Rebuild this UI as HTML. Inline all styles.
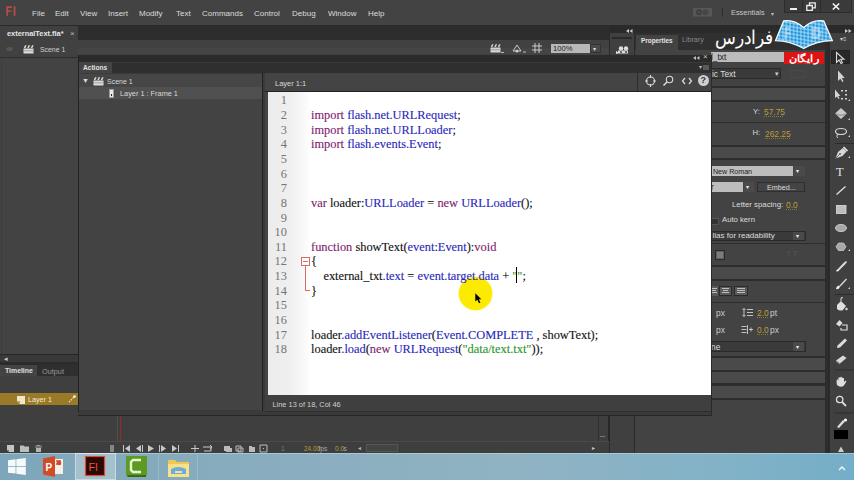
<!DOCTYPE html>
<html><head><meta charset="utf-8">
<style>
*{margin:0;padding:0;box-sizing:border-box}
html,body{width:854px;height:480px;overflow:hidden;background:#434343;font-family:"Liberation Sans",sans-serif;font-size:8.5px;color:#ddd;position:relative}
.a{position:absolute}
.t{position:absolute;white-space:nowrap;line-height:1}
.menu .t{top:9.7px;font-size:8px;color:#dcdcdc}
.code{font-family:"Liberation Serif",serif;font-size:12.4px;line-height:14.65px;color:#111;-webkit-text-stroke:0.12px currentColor}
.ln{position:absolute;left:0;width:22px;text-align:right;color:#747474;-webkit-text-stroke:0}
.cl{position:absolute;left:46px;white-space:pre}
.kw{color:#80226f}
.bl{color:#2828bb}
.gr{color:#2a962a}
.gold{color:#bb9c38;text-decoration:underline dotted #8a7a3a}
svg{position:absolute;overflow:visible}
</style></head><body>
<!-- ===== MENU BAR ===== -->
<div class="a menu" style="left:0;top:0;width:854px;height:25px;background:#434343">
  <svg style="left:6px;top:6px" width="10" height="10" viewBox="0 0 10 10"><path d="M0.3 0.3h5.5v1.6H2.1v2.3h3.2v1.6H2.1v4H0.3z M7.6 0.3h1.9v9.5H7.6z" fill="#b24e44"/></svg>
  <div class="t" style="left:32px">File</div>
  <div class="t" style="left:55px">Edit</div>
  <div class="t" style="left:80px">View</div>
  <div class="t" style="left:108px">Insert</div>
  <div class="t" style="left:139px">Modify</div>
  <div class="t" style="left:176px">Text</div>
  <div class="t" style="left:202px">Commands</div>
  <div class="t" style="left:254px">Control</div>
  <div class="t" style="left:292px">Debug</div>
  <div class="t" style="left:328px">Window</div>
  <div class="t" style="left:368px">Help</div>
  <svg style="left:693px;top:8px" width="19" height="9" viewBox="0 0 19 9"><rect width="19" height="8.5" fill="#575757"/><circle cx="6" cy="4.2" r="3" fill="#3d3d3d"/><circle cx="12.5" cy="4.2" r="3" fill="#464646"/><path d="M4.5 4.2h3" stroke="#666" stroke-width="0.8"/></svg>
  <div class="a" style="left:722px;top:8px;width:1px;height:9px;background:#2e2e2e"></div>
  <div class="t" style="left:731px;top:9.44px;font-size:7.4px;color:#c8c8c8">Essentials</div>
  <div class="t" style="left:771px;top:11px;font-size:6px;color:#bbb">▾</div>
  <!-- window buttons -->
  <div class="a" style="left:784px;top:0;width:68px;height:13px;background:#3a3a3a;border:1px solid #2c2c2c;border-top:0"></div>
  <div class="a" style="left:802px;top:0;width:1px;height:12px;background:#2c2c2c"></div>
  <div class="a" style="left:820px;top:0;width:1px;height:12px;background:#2c2c2c"></div>
  <div class="a" style="left:790px;top:7.5px;width:7px;height:2px;background:#f0f0f0"></div>
  <svg style="left:806px;top:2px" width="10" height="9" viewBox="0 0 10 9"><path d="M3.5 0.8h5.7v5h-5.7z" fill="none" stroke="#eee" stroke-width="1.3"/><path d="M0.8 3.5h5.5v4.8H0.8z" fill="#3a3a3a" stroke="#eee" stroke-width="1.3"/></svg>
  <svg style="left:832px;top:2.5px" width="8" height="7" viewBox="0 0 8 7"><path d="M0.8 0.5L7.2 6.5M7.2 0.5L0.8 6.5" stroke="#f4f4f4" stroke-width="1.6"/></svg>
</div>
<div class="a" style="left:0;top:25px;width:854px;height:1px;background:#2a2a2a"></div>
<!-- ===== DOC TAB BAR ===== -->
<div class="a" style="left:0;top:26px;width:609px;height:14px;background:#2d2d2d"></div>
<div class="a" style="left:0;top:26px;width:78px;height:14px;background:#404040"></div>
<div class="t" style="left:7px;top:30.24px;font-size:7.4px;font-weight:bold;color:#e6e6e6">externalText.fla*</div>
<div class="t" style="left:70px;top:30px;font-size:8px;color:#bbb">×</div>
<!-- ===== SCENE BAR ===== -->
<div class="a" style="left:0;top:40px;width:609px;height:17px;background:#414141"></div>
<div class="a" style="left:78px;top:48px;width:531px;height:6px;background:#454545"></div>
<div class="a" style="left:6px;top:47px;width:7px;height:4px;border-radius:50%;background:#555"></div>
<svg style="left:23px;top:44px" width="11" height="10" viewBox="0 0 11 10"><path d="M0.5 4.5h10v5h-10z" fill="#dcdcdc"/><path d="M1 6.8h9" stroke="#8a8a8a" stroke-width="0.7"/><path d="M0.8 4L2 1.2h1.6L2.4 4z M4.3 4L5.5 1.2h1.6L5.9 4z M7.8 4L9 1.2h1.6L9.4 4z" fill="#dcdcdc"/></svg>
<div class="t" style="left:40px;top:47.2px;font-size:6.9px;color:#d0d0d0">Scene 1</div>
<!-- stage toolbar icons -->
<svg style="left:490px;top:43px" width="11" height="10" viewBox="0 0 11 10"><path d="M0.5 4.5h10v5h-10z" fill="#d4d4d4"/><path d="M1 6.8h9" stroke="#8a8a8a" stroke-width="0.7"/><path d="M0.8 4L2 1.2h1.6L2.4 4z M4.3 4L5.5 1.2h1.6L5.9 4z M7.8 4L9 1.2h1.6L9.4 4z" fill="#d4d4d4"/></svg><div class="a" style="left:501px;top:52px;width:3px;height:1px;background:#bbb"></div>
<svg style="left:512px;top:43px" width="14" height="10" viewBox="0 0 14 10"><path d="M1 8 L5 2 L9 8z" fill="none" stroke="#ccc" stroke-width="1"/><circle cx="5" cy="8" r="1.5" fill="#ccc"/><path d="M11 9h3" stroke="#bbb"/></svg>
<svg style="left:532px;top:43px" width="10" height="10" viewBox="0 0 10 10"><path d="M0 3h10M0 7h10M3 0v10M7 0v10" stroke="#ccc" stroke-width="1"/></svg>
<div class="a" style="left:551px;top:44px;width:39px;height:9px;background:#b8b8b8"></div>
<div class="t" style="left:553px;top:45px;font-size:7.6px;color:#222">100%</div>
<div class="a" style="left:590px;top:44px;width:11px;height:9px;background:#4a4a4a;border:1px solid #333"></div>
<div class="t" style="left:593px;top:46px;font-size:6px;color:#ddd">▾</div>
<div class="a" style="left:0;top:57px;width:609px;height:1px;background:#2e2e2e"></div>
<!-- ===== STAGE LEFT ===== -->
<div class="a" style="left:0;top:58px;width:78px;height:296px;background:#434343"></div>
<div class="a" style="left:1px;top:58px;width:1px;height:296px;background:#3d3d3d"></div>
<!-- ===== TIMELINE ===== -->
<div class="a" style="left:0;top:354px;width:78px;height:1px;background:#262626"></div>
<div class="a" style="left:0;top:355px;width:78px;height:7px;background:#393939"></div>
<div class="t" style="left:4px;top:355px;font-size:7px;color:#ccc">◂</div>
<div class="a" style="left:0;top:362px;width:78px;height:3px;background:#2b2b2b"></div>
<div class="a" style="left:0;top:365px;width:609px;height:11px;background:#2f2f2f"></div>
<div class="a" style="left:0;top:365px;width:37px;height:11px;background:#434343"></div>
<div class="t" style="left:5px;top:368.2px;font-size:6.9px;font-weight:bold;color:#e0e0e0">Timeline</div>
<div class="t" style="left:42px;top:367.8px;font-size:7.3px;color:#999">Output</div>
<div class="a" style="left:0;top:376px;width:609px;height:77px;background:#3f3f3f"></div>
<div class="a" style="left:78px;top:376px;width:1px;height:40px;background:#222"></div>
<div class="a" style="left:0;top:392.5px;width:78px;height:12.5px;background:#9a7a27"></div>
<svg style="left:17px;top:395.5px" width="8" height="8" viewBox="0 0 8 8"><path d="M0 0h8v8H3L0 5z" fill="#efe6cf"/><path d="M0 5h3v3z" fill="#b8a070"/></svg>
<div class="t" style="left:28px;top:395.91px;font-size:7.2px;color:#f4ecd8">Layer 1</div>
<svg style="left:68px;top:395px" width="8" height="8" viewBox="0 0 8 8"><path d="M1 7 L6 2" stroke="#e8dcc0" stroke-width="1.3" stroke-dasharray="1.5 1"/><circle cx="6.5" cy="1.5" r="1.3" fill="#fff"/></svg>
<div class="a" style="left:117px;top:416px;width:1px;height:37px;background:#505048"></div>
<div class="a" style="left:120px;top:360px;width:1px;height:82px;background:#9a2a2a"></div>
<div class="a" style="left:598px;top:416px;width:1px;height:37px;background:#303030"></div>
<div class="a" style="left:599px;top:416px;width:9px;height:27px;background:#3f3f3f"></div>
<div class="a" style="left:600px;top:436px;width:5px;height:1px;background:#777"></div>
<div class="a" style="left:599px;top:443px;width:9px;height:10px;background:#474747;border-top:1px solid #2e2e2e"></div>
<div class="a" style="left:608px;top:376px;width:2px;height:77px;background:#262626"></div>
<!-- bottom toolbar -->
<div class="a" style="left:0;top:441px;width:609px;height:1px;background:#4a4a4a"></div>
<div class="a" style="left:0;top:442px;width:609px;height:11px;background:#3e3e3e"></div>
<svg style="left:7px;top:445px" width="40" height="8" viewBox="0 0 40 8"><path d="M0 0h7v7H2L0 5z" fill="#c4c4c4"/><path d="M0 5h2v2z" fill="#777"/><path d="M13 0.5h3.5l1 1H22v5.5h-9z" fill="#bdbdbd"/><path d="M28 1h7L31.5 0z" fill="#bbb"/><path d="M28 2h7" stroke="#bbb" stroke-width="0.8"/><path d="M29 3h5v4h-5z" fill="#b5b5b5"/></svg>
<div class="a" style="left:110px;top:445px;width:4px;height:7px;background:#858585"></div>
<svg style="left:122px;top:445px" width="150" height="7" viewBox="0 0 150 7" fill="#c8c8c8"><path d="M1 0h1v7H1z M8 0v7L3 3.5z"/><path d="M14 0v7L9 3.5z M15 0h1v7h-1z" transform="translate(5 0)"/><path d="M26 0v7l6-3.5z"/><path d="M37 0h1v7h-1z M39 0v7l5-3.5z"/><path d="M50 0v7l5-3.5z M56 0h1v7h-1z"/><path d="M69 3.5h8M73 0v7" stroke="#c8c8c8"/><path d="M81 2h8v4h-7M88 0l2 2-2 2" stroke="#c8c8c8" fill="none"/><path d="M102 1h6v5h-6z M104 3h6v4h-6z" fill="#bbb"/><path d="M114 1h5v5h-5z M116 3h5v4h-5z" stroke="#bbb" fill="none"/><path d="M127 1h3v6h-3z M130 2h3v5h-3z" fill="#bbb"/><path d="M138 0h7v7h-7z" stroke="#bbb" fill="none"/><path d="M141 3h1v1h-1z"/></svg>
<div class="t" style="left:281px;top:445.5px;font-size:6.8px;color:#777">1</div>
<div class="t" style="left:304px;top:445.5px;font-size:6.4px;color:#b89a38">24.00</div>
<div class="t" style="left:318.5px;top:445.5px;font-size:6.6px;color:#aaa">fps</div>
<div class="t" style="left:335px;top:445.5px;font-size:6.6px;color:#b89a38">0.0</div>
<div class="t" style="left:343.5px;top:445.5px;font-size:6.6px;color:#aaa">s</div>
<div class="t" style="left:358px;top:445px;font-size:6px;color:#bbb">◂</div>
<div class="a" style="left:366px;top:444px;width:32px;height:8px;background:#444;border:1px solid #555"></div>
<div class="t" style="left:592px;top:445px;font-size:6px;color:#ccc">▸</div>
<!-- ===== RIGHT DOCK ===== -->
<div class="a" style="left:609px;top:26px;width:245px;height:427px;background:#2a2a2a"></div>
<svg style="left:626px;top:29px" width="7" height="4" viewBox="0 0 7 4"><path d="M0 2L3 0V4Z M3.5 2L6.5 0V4Z" fill="#ccc"/></svg>
<svg style="left:845px;top:29px" width="7" height="4" viewBox="0 0 7 4"><path d="M3 2L0 0V4Z M6.5 2L3.5 0V4Z" fill="#ccc"/></svg>
<!-- camera panel -->
<div class="a" style="left:610px;top:33px;width:24px;height:420px;background:#404040"></div>
<div class="a" style="left:612px;top:37px;width:20px;height:2px;background:#2a2a2a"></div>
<svg style="left:616px;top:46px" width="14" height="8" viewBox="0 0 14 8"><circle cx="5" cy="2.5" r="2.2" fill="#ddd"/><circle cx="10" cy="2.5" r="2.2" fill="#ddd"/><path d="M2 4.5h10v3H2z" fill="#ddd"/><path d="M0 5l2 1v1.5L0 8z" fill="#ddd"/><circle cx="5" cy="6" r="1" fill="#404040"/><circle cx="10" cy="6" r="1" fill="#404040"/></svg>
<!-- properties panel -->
<div class="a" style="left:635px;top:33px;width:193px;height:420px;background:#434343"></div>
<div class="a" style="left:635px;top:33px;width:193px;height:17px;background:#303030"></div>
<div class="a" style="left:636px;top:35px;width:42px;height:15px;background:#434343"></div>
<div class="t" style="left:641px;top:38.08px;font-size:6.4px;font-weight:bold;color:#e6e6e6">Properties</div>
<div class="t" style="left:682px;top:37.49px;font-size:7.1px;color:#888">Library</div>
<div class="a" style="left:711px;top:52px;width:73px;height:10px;background:#bcbcbc"></div>
<div class="t" style="left:711px;top:53px;font-size:8.4px;color:#222">l_txt</div>
<div class="a" style="left:711px;top:68px;width:70px;height:11px;background:#3a3a3a;border:1px solid #2a2a2a"></div>
<div class="t" style="left:712px;top:70px;font-size:8.4px;color:#ddd">ic Text</div>
<div class="t" style="left:775px;top:70px;font-size:7px;color:#ccc">▾</div>
<div class="a" style="left:790px;top:70px;width:15px;height:8px;border:1px solid #4a4a4a"></div>
<div class="a" style="left:711px;top:86px;width:117px;height:2px;background:#2d2d2d"></div>
<div class="a" style="left:711px;top:88px;width:114px;height:12px;background:#4a4a4a"></div>
<div class="a" style="left:711px;top:100px;width:117px;height:2px;background:#2d2d2d"></div>
<div class="t" style="left:753px;top:108.48px;font-size:7.7px;color:#ddd">Y:</div>
<div class="t gold" style="left:764px;top:108.48px;font-size:7.7px;font-size:8.4px">57.75</div>
<div class="a" style="left:711px;top:122px;width:114px;height:1px;background:#2d2d2d"></div>
<div class="t" style="left:752.5px;top:129.48px;font-size:7.7px;color:#ddd">H:</div>
<div class="t gold" style="left:765px;top:129.74px;font-size:7.4px;font-size:8.4px">262.25</div>
<div class="a" style="left:711px;top:145px;width:117px;height:2px;background:#2d2d2d"></div>
<div class="a" style="left:711px;top:147px;width:114px;height:11px;background:#4a4a4a"></div>
<div class="a" style="left:711px;top:158px;width:117px;height:2px;background:#2d2d2d"></div>
<div class="a" style="left:711px;top:166px;width:82px;height:10px;background:#bdbdbd"></div>
<div class="t" style="left:713px;top:168.59px;font-size:7.1px;color:#222">New Roman</div>
<div class="a" style="left:794px;top:166px;width:11px;height:10px;background:#4a4a4a"></div>
<div class="t" style="left:796px;top:168px;font-size:6px;color:#eee">▾</div>
<div class="a" style="left:711px;top:182px;width:32px;height:10px;background:#bdbdbd"></div>
<div class="t" style="left:711px;top:183px;font-size:8.4px;color:#333">r</div>
<div class="a" style="left:744px;top:182px;width:10px;height:10px;background:#4a4a4a"></div>
<div class="t" style="left:746px;top:184px;font-size:6px;color:#eee">▾</div>
<div class="a" style="left:757px;top:182px;width:48px;height:10px;background:#444;border:1px solid #2e2e2e"></div>
<div class="t" style="left:767px;top:183.91px;font-size:7.2px;color:#ddd">Embed...</div>
<div class="t" style="left:732px;top:200.9px;font-size:7.8px;color:#ddd">Letter spacing:</div>
<div class="t gold" style="left:786px;top:201px;font-size:8.4px">0.0</div>
<div class="a" style="left:711px;top:218px;width:8px;height:7px;background:#333;border:1px solid #555"></div>
<div class="t" style="left:722px;top:216.48px;font-size:7.7px;color:#ddd">Auto kern</div>
<div class="a" style="left:711px;top:231px;width:95px;height:10px;background:#3a3a3a;border:1px solid #2a2a2a"></div>
<div class="t" style="left:712.5px;top:232.23px;font-size:8.0px;color:#ddd">lias for readability</div>
<div class="a" style="left:793px;top:232px;width:11px;height:8px;background:#4a4a4a"></div>
<div class="t" style="left:796px;top:233px;font-size:6px;color:#eee">▾</div>
<div class="a" style="left:711px;top:243px;width:117px;height:1px;background:#2d2d2d"></div>
<div class="a" style="left:715px;top:250px;width:10px;height:10px;background:#5e5e5e;border:1px solid #2a2a2a"></div>
<svg style="left:717px;top:252px" width="6" height="6" viewBox="0 0 6 6"><path d="M0 1h6M0 3h6M0 5h6" stroke="#aaa" stroke-width="0.8"/></svg>
<div class="t" style="left:786px;top:250px;font-size:8px;color:#555">T T</div>
<div class="a" style="left:711px;top:265px;width:117px;height:2px;background:#2d2d2d"></div>
<div class="a" style="left:711px;top:267px;width:114px;height:12px;background:#4a4a4a"></div>
<div class="a" style="left:711px;top:279px;width:117px;height:2px;background:#2d2d2d"></div>
<div class="a" style="left:711px;top:286px;width:7px;height:10px;background:#5a5a5a"></div>
<div class="a" style="left:719px;top:286px;width:13px;height:10px;background:#5a5a5a;border:1px solid #2a2a2a"></div>
<div class="a" style="left:734px;top:286px;width:14px;height:10px;background:#5a5a5a;border:1px solid #2a2a2a"></div>
<svg style="left:711px;top:287px" width="38" height="8" viewBox="0 0 38 8"><path d="M1 1.5h5M1 3.5h4M1 5.5h5M11 1.5h7M12 3.5h5M11 5.5h7M26 1.5h8M26 3.5h8M26 5.5h8" stroke="#c8c8c8" stroke-width="0.9"/></svg>
<div class="a" style="left:711px;top:302px;width:117px;height:1px;background:#2d2d2d"></div>
<div class="t" style="left:716px;top:309px;font-size:8.4px;color:#ccc">px</div>
<svg style="left:742px;top:308px" width="11" height="9" viewBox="0 0 11 9"><path d="M2 0.5v8M0.5 2L2 0.5 3.5 2M0.5 7L2 8.5 3.5 7M5 1.5h6M5 4.5h6M5 7.5h6" stroke="#d0d0d0" stroke-width="0.9" fill="none"/></svg>
<div class="t gold" style="left:757px;top:309px;font-size:8.4px">2.0</div>
<div class="t" style="left:770px;top:309px;font-size:8.4px;color:#ccc">pt</div>
<div class="t" style="left:716px;top:326px;font-size:8.4px;color:#ccc">px</div>
<svg style="left:741px;top:325px" width="12" height="9" viewBox="0 0 12 9"><path d="M0.5 1.5h5M0.5 4.5h5M0.5 7.5h5M6.5 0v9M8 4.5h4M10 2.5v4" stroke="#d0d0d0" stroke-width="0.9" fill="none"/></svg>
<div class="t gold" style="left:757px;top:326px;font-size:8.4px">0.0</div>
<div class="t" style="left:770px;top:326px;font-size:8.4px;color:#ccc">px</div>
<div class="a" style="left:711px;top:341px;width:95px;height:11px;background:#3a3a3a;border:1px solid #2a2a2a"></div>
<div class="t" style="left:711px;top:343px;font-size:8.4px;color:#ddd">ne</div>
<div class="a" style="left:793px;top:342px;width:11px;height:9px;background:#4a4a4a"></div>
<div class="t" style="left:796px;top:344px;font-size:6px;color:#eee">▾</div>
<div class="a" style="left:711px;top:356px;width:117px;height:2px;background:#2d2d2d"></div>
<div class="a" style="left:711px;top:358px;width:114px;height:12px;background:#4a4a4a"></div>
<div class="a" style="left:711px;top:370px;width:117px;height:2px;background:#2d2d2d"></div>
<div class="a" style="left:711px;top:372px;width:114px;height:11px;background:#4a4a4a"></div>
<div class="a" style="left:711px;top:383px;width:117px;height:3px;background:#2d2d2d"></div>
<div class="a" style="left:711px;top:386px;width:114px;height:12px;background:#4a4a4a"></div>
<div class="a" style="left:711px;top:398px;width:117px;height:2px;background:#2d2d2d"></div>
<div class="a" style="left:825px;top:33px;width:3px;height:420px;background:#2d2d2d"></div>
<!-- tools -->
<div class="a" style="left:828px;top:33px;width:26px;height:420px;background:#404040"></div>
<div class="a" style="left:828px;top:33px;width:2px;height:420px;background:#2a2a2a"></div>
<div class="t" style="left:840px;top:36px;font-size:6px;color:#ccc">▾≡</div>
<div class="a" style="left:831px;top:50px;width:19px;height:14px;background:#282828;border:1px solid #222"></div>
<svg style="left:830px;top:50px" width="24" height="405" viewBox="0 0 24 405">
 <g fill="none" stroke="#d8d8d8" stroke-width="1.1">
  <path d="M6.5 2.5 L6.5 12.5 L9 10 L11 13.5 L12.5 12.7 L10.7 9.3 L14 9.3 Z"/>
 </g>
 <g fill="#d4d4d4">
  <path d="M8 20.5 L8 31 L10.3 28.8 L12.3 32 L13.5 31.2 L11.8 28 L14.8 28 Z"/>
  <path d="M5 39.5 L5 48 L7 46.5 L8.5 49 L9.5 48.5 L8.3 46 L10.5 46 Z"/>
  <path d="M11 40h2v1.5h-2zM15 40h2v1.5h-2zM15 44h2v1.5h-2zM11 48h2v1.5h-2zM15 48h2v1.5h-2z"/>
  <path d="M18 51 L20 49 L20 51 Z M18 70 L20 68 L20 70 Z M18 87 L20 85 L20 87 Z M18 108 L20 106 L20 108 Z M18 201 L20 199 L20 201 Z M18 239 L20 237 L20 239 Z"/>
 </g>
 <g fill="#cfcfcf">
  <path d="M11 58 L17 63.5 L11 69 L5 63.5 Z" fill="#c8c8c8"/>
  <path d="M5 63.5 Q11 67 17 63.5" stroke="#777" stroke-width="0.8" fill="none"/>
 </g>
 <ellipse cx="11" cy="81.5" rx="5.5" ry="3" fill="none" stroke="#d4d4d4" stroke-width="1.2"/>
 <path d="M7.5 84 Q6 87 8 88" fill="none" stroke="#d4d4d4" stroke-width="1"/>
 <path d="M5 93.5 h22" stroke="#2c2c2c" stroke-width="1"/>
 <path d="M5.5 108.5 L8 102 L13 98 L16.5 101.5 L12.5 106 Z" fill="#d8d8d8"/>
 <path d="M13.5 97 L17.5 101" stroke="#e8e8e8" stroke-width="1.6"/>
 <path d="M5.5 108.5 L9.5 104.5" stroke="#555" stroke-width="0.8"/><circle cx="10" cy="104" r="0.9" fill="#555"/>
 <text x="6" y="125.9" font-family="Liberation Serif" font-size="12.5" fill="#e0e0e0">T</text>
 <path d="M6.5 144.5 L15.5 136.5" stroke="#e0e0e0" stroke-width="1.3"/>
 <rect x="6.5" y="155.5" width="9.5" height="8" fill="#bdbdbd" stroke="#ddd" stroke-width="0.8"/>
 <ellipse cx="11" cy="178" rx="5.5" ry="3.6" fill="#a8a8a8" stroke="#ddd" stroke-width="0.8"/>
 <path d="M8.5 193 L13.5 193 L16 196.7 L13.5 200.5 L8.5 200.5 L6 196.7 Z" fill="#a8a8a8" stroke="#ccc" stroke-width="0.8"/>
 <path d="M6.5 220.5 L13.5 213 L16 211 L17 212 L15 214.5 L8 221.5 Z" fill="#ddd"/>
 <path d="M6 221.5 L7 219.5 L8.5 221 Z" fill="#fff"/>
 <path d="M16.5 229 L10 236" stroke="#ddd" stroke-width="1.3"/>
 <path d="M6 239 Q6.5 235.5 9.5 235.5 Q10.5 237 9 238.5 Q7.5 239.5 6 239 Z" fill="#eee"/>
 <path d="M5 244.5 h22" stroke="#2c2c2c" stroke-width="1"/>
 <path d="M7 255 L11 251 L16 256 L12.5 260.5 Q9 261 7 259 Z" fill="#e0e0e0"/>
 <path d="M11 251 L11 248 Q12 247 13 248" stroke="#ddd" fill="none" stroke-width="1"/>
 <circle cx="16.5" cy="259" r="1.2" fill="#ddd"/>
 <path d="M6 274 L9.5 270 L12.5 273 L9.5 276.5 Z" fill="#ddd"/>
 <path d="M12 275 h5 v5 h-6 v-2" stroke="#ddd" fill="none" stroke-width="1.2"/>
 <path d="M15 288.5 L17 290.5 L10 297.5 L7 298 L7.5 295.5 Z" fill="#ddd"/>
 <g transform="translate(0 4)"><path d="M6 306.5 L13 301.5 L16.5 304 L10 309.5 Z" fill="#d8d8d8"/>
 <path d="M6 306.5 L10 309.5 L10 310.5 L6 307.5 Z" fill="#999"/></g>
 <path d="M5 320 h22" stroke="#2c2c2c" stroke-width="1"/>
<path transform="translate(0 3)" d="M7 332 Q6 329 7 326 L8 327 L8.3 328 L8.5 324.5 Q9.5 324 10 325 L10.5 324 Q11.5 323.5 12 324.5 L12.5 325 Q13.5 324.5 14 325.5 L14 329 L15.5 327.5 Q16.7 327.5 16.2 329 L13.5 333 Q10 335 7 332 Z" fill="#ddd"/>
 <circle cx="9.7" cy="349.5" r="3.2" fill="none" stroke="#ddd" stroke-width="1.3"/>
 <path d="M12 352 L16 356" stroke="#ddd" stroke-width="1.8"/>
 <path d="M5 363 h22" stroke="#2c2c2c" stroke-width="1"/>
 <path d="M7 377 L13 370 L15 371.5 L9 378 Z" fill="#ddd"/>
 <circle cx="15.5" cy="370" r="1.6" fill="#fff"/>
 <rect x="4" y="380" width="14" height="9" fill="#000"/>
 <path d="M8 402 L11 396.5 L14 402 Z" fill="#ccc"/>
</svg>
<!-- ===== ACTIONS PANEL ===== -->
<div class="a" style="left:78px;top:55px;width:634px;height:7px;background:#2b2b2b"></div>
<svg style="left:693px;top:56px" width="7" height="4" viewBox="0 0 7 4"><path d="M0 2L3 0V4Z M3.5 2L6.5 0V4Z" fill="#bbb"/></svg>
<div class="t" style="left:703px;top:53px;font-size:8px;color:#ccc">×</div>
<div class="a" style="left:78px;top:62px;width:634px;height:11px;background:#2f2f2f"></div>
<div class="a" style="left:78px;top:62px;width:634px;height:1px;background:#393939"></div>
<div class="a" style="left:79px;top:62px;width:33px;height:12px;background:#444"></div>
<div class="t" style="left:83px;top:64.91px;font-size:6.6px;font-weight:bold;color:#e0e0e0">Actions</div>
<div class="t" style="left:699px;top:64px;font-size:6px;color:#bbb">▾</div>
<div class="a" style="left:703px;top:65px;width:6px;height:5px;background:#5a5a5a"></div>
<div class="a" style="left:78px;top:73px;width:634px;height:343px;background:#3a3a3a"></div>
<!-- left tree -->
<div class="a" style="left:78px;top:55px;width:1px;height:361px;background:#222"></div>
<div class="a" style="left:79px;top:74px;width:183px;height:336px;background:#434343"></div>
<div class="a" style="left:79px;top:74px;width:183px;height:13px;background:#464646"></div>
<div class="a" style="left:79px;top:87px;width:183px;height:12px;background:#505050"></div>
<div class="t" style="left:82px;top:77px;font-size:7px;color:#ddd">▼</div>
<svg style="left:93px;top:75.5px" width="11" height="10" viewBox="0 0 11 10"><path d="M0.5 4.5h10v5h-10z" fill="#dcdcdc"/><path d="M1 6.8h9" stroke="#8a8a8a" stroke-width="0.7"/><path d="M0.8 4L2 1.2h1.6L2.4 4z M4.3 4L5.5 1.2h1.6L5.9 4z M7.8 4L9 1.2h1.6L9.4 4z" fill="#dcdcdc"/></svg>
<div class="t" style="left:107px;top:77.7px;font-size:7.0px;color:#d8d8d8">Scene 1</div>
<div class="a" style="left:109px;top:89px;width:5px;height:9px;background:#e8e8e8;border:1px solid #999"></div>
<div class="a" style="left:111px;top:94px;width:1px;height:2px;background:#222"></div>
<div class="t" style="left:120px;top:89.78px;font-size:7.35px;color:#d8d8d8">Layer 1 : Frame 1</div>
<div class="a" style="left:262px;top:73px;width:1px;height:338px;background:#222"></div>
<div class="a" style="left:263px;top:73px;width:2px;height:338px;background:#3a3a3a"></div>
<!-- right code panel -->
<div class="a" style="left:265px;top:73px;width:447px;height:19px;background:#444"></div>
<div class="t" style="left:275px;top:79.65px;font-size:7.5px;color:#d8d8d8">Layer 1:1</div>
<div class="a" style="left:637px;top:73px;width:1px;height:18px;background:#2c2c2c"></div>
<svg style="left:645px;top:75px" width="64" height="12" viewBox="0 0 64 12" fill="none" stroke="#d8d8d8" stroke-width="1.1">
 <circle cx="5.5" cy="6" r="4"/><path d="M5.5 0v3M5.5 9v3M0 6h3M8 6h3"/>
 <circle cx="24.5" cy="4.5" r="3.2"/><path d="M22 7 L18.5 10.5" stroke-width="1.6"/>
 <path d="M40 3 L37.5 6 L40 9 M44 3 L46.5 6 L44 9" stroke-width="1.3"/>
</svg>
<div class="a" style="left:698px;top:75px;width:11px;height:11px;border-radius:50%;background:#d0d0d0"></div>
<div class="t" style="left:700.5px;top:76px;font-size:9px;font-weight:bold;color:#333">?</div>
<div class="a" style="left:265px;top:91px;width:447px;height:1px;background:#222"></div>
<div class="a" style="left:265px;top:92px;width:3px;height:303px;background:#444"></div>
<div class="a" style="left:268px;top:92px;width:444px;height:303px;background:#fff"></div>
<div class="a" style="left:268px;top:92px;width:43px;height:303px;background:linear-gradient(90deg,#ececec 0,#efefef 50%,#f6f6f6 75%,#fff 100%)"></div>
<div class="a" style="left:265px;top:395px;width:447px;height:17px;background:#3f3f3f"></div>
<div class="t" style="left:272.5px;top:400.74px;font-size:7.4px;color:#cfcfcf">Line 13 of 18, Col 46</div>
<div class="a" style="left:387px;top:411.5px;width:15px;height:2px;background:#222"></div>
<div class="a" style="left:78px;top:412px;width:634px;height:4px;background:#3a3a3a"></div>
<div class="a" style="left:78px;top:415px;width:634px;height:1px;background:#262626"></div>
<div class="a" style="left:711px;top:55px;width:1px;height:361px;background:#2a2a2a"></div>
<div class="a" style="left:265px;top:410.5px;width:446px;height:1px;background:#2e2e2e"></div>
<div class="a" style="left:459px;top:277px;width:32.5px;height:32.5px;border-radius:50%;background:#fcea00;box-shadow:0 0 1px 0.5px rgba(252,234,0,0.6)"></div>
<div class="a code" style="left:265px;top:94px;width:447px;height:300px">
  <div class="ln" style="top:-0.7px">1</div><div class="cl" style="top:-0.7px"></div>
  <div class="ln" style="top:13.95px">2</div><div class="cl" style="top:13.95px"><span class="kw">import</span> <span class="bl">flash.net.URLRequest</span>;</div>
  <div class="ln" style="top:28.6px">3</div><div class="cl" style="top:28.6px"><span class="kw">import</span> <span class="bl">flash.net.URLLoader</span>;</div>
  <div class="ln" style="top:43.25px">4</div><div class="cl" style="top:43.25px"><span class="kw">import</span> <span class="bl">flash.events.Event</span>;</div>
  <div class="ln" style="top:57.9px">5</div><div class="cl" style="top:57.9px"></div>
  <div class="ln" style="top:72.55px">6</div><div class="cl" style="top:72.55px"></div>
  <div class="ln" style="top:87.2px">7</div><div class="cl" style="top:87.2px"></div>
  <div class="ln" style="top:101.85px">8</div><div class="cl" style="top:101.85px"><span class="kw">var</span> loader:<span class="bl">URLLoader</span> = <span class="kw">new</span> <span class="bl">URLLoader</span>();</div>
  <div class="ln" style="top:116.5px">9</div><div class="cl" style="top:116.5px"></div>
  <div class="ln" style="top:131.15px">10</div><div class="cl" style="top:131.15px"></div>
  <div class="ln" style="top:145.8px">11</div><div class="cl" style="top:145.8px"><span class="kw">function</span> showText(<span class="bl">event</span>:<span class="bl">Event</span>):<span class="kw">void</span></div>
  <div class="ln" style="top:160.45px">12</div><div class="cl" style="top:160.45px">{</div>
  <div class="ln" style="top:175.1px">13</div><div class="cl" style="top:175.1px">    external_txt<span class="bl">.text</span> = <span class="bl">event.target.data</span> + <span class="gr">""</span>;</div>
  <div class="ln" style="top:189.75px">14</div><div class="cl" style="top:189.75px">}</div>
  <div class="ln" style="top:204.4px">15</div><div class="cl" style="top:204.4px"></div>
  <div class="ln" style="top:219.05px">16</div><div class="cl" style="top:219.05px"></div>
  <div class="ln" style="top:233.7px">17</div><div class="cl" style="top:233.7px">loader<span class="bl">.addEventListener</span>(<span class="bl">Event.COMPLETE</span> , showText);</div>
  <div class="ln" style="top:248.35px">18</div><div class="cl" style="top:248.35px">loader<span class="bl">.load</span>(<span class="kw">new</span> <span class="bl">URLRequest</span>(<span class="gr">"data/text.txt"</span>));</div>
</div>
<!-- fold marker -->
<div class="a" style="left:301px;top:257px;width:9px;height:9px;border:1px solid #d86a6a;background:#fff"></div>
<div class="a" style="left:303px;top:261px;width:5px;height:1px;background:#d86a6a"></div>
<div class="a" style="left:305px;top:266px;width:1px;height:25px;background:#d86a6a"></div>
<div class="a" style="left:305px;top:290px;width:5px;height:1px;background:#d86a6a"></div>
<!-- text cursor -->
<div class="a" style="left:516px;top:267px;width:1px;height:16px;background:#000"></div>
<!-- yellow highlight + mouse -->
<svg style="left:475px;top:293px" width="8" height="11" viewBox="0 0 8 11"><path d="M0.3 0.2 L0.3 8.6 L2.3 6.8 L4 10.2 L5.4 9.5 L3.8 6.3 L6.3 6.3 Z" fill="#000"/></svg>
<!-- ===== TASKBAR ===== -->
<div class="a" style="left:0;top:453px;width:854px;height:27px;background:linear-gradient(90deg,#7ea6ba 0%,#8aaebf 35%,#90b3c3 60%,#82b2c7 85%,#74aec8 100%)"></div>
<div class="a" style="left:0;top:453px;width:854px;height:1px;background:rgba(200,225,235,0.5)"></div>
<div class="a" style="left:75px;top:453px;width:41px;height:27px;background:rgba(255,255,255,0.28);border:1px solid rgba(255,255,255,0.4)"></div>
<div class="a" style="left:158px;top:455px;width:1px;height:25px;background:rgba(255,255,255,0.18)"></div>
<div class="a" style="left:197px;top:455px;width:1px;height:25px;background:rgba(255,255,255,0.18)"></div>
<svg style="left:7.6px;top:457.8px" width="18" height="17" viewBox="0 0 18 17" fill="#f6fafc"><path d="M0 2.2 L7.6 1.3 L7.6 8.1 L0 8.1Z M8.3 1.2 L17.8 0 L17.8 8.1 L8.3 8.1Z M0 8.8 L7.6 8.8 L7.6 15.6 L0 14.7Z M8.3 8.8 L17.8 8.8 L17.8 17 L8.3 15.7Z"/></svg>
<svg style="left:43px;top:456px" width="21" height="21" viewBox="0 0 21 21"><path d="M0 2.5 L12 0 L12 21 L0 18.5 Z" fill="#d24b28"/><path d="M12 3 h8 v15 h-8z" fill="#f6f0ea"/><path d="M13 5 h5 M13 8 h5" stroke="#d24b28" stroke-width="1.4"/><circle cx="16" cy="7" r="2.3" fill="#d24b28"/><text x="2.5" y="14.5" font-family="Liberation Sans" font-weight="bold" font-size="10" fill="#fff">P</text></svg>
<svg style="left:85px;top:456px" width="20" height="20" viewBox="0 0 20 20"><rect x="0.5" y="0.5" width="19" height="19" fill="#2a0a06" stroke="#e04a30" stroke-width="1.2"/><text x="3.5" y="14.5" font-family="Liberation Sans" font-size="11" fill="#e8553a">Fl</text></svg>
<svg style="left:125px;top:455px" width="23" height="23" viewBox="0 0 23 23"><path d="M1 1h21v19l-2 2H3l-2-2z" fill="#5c9a24"/><path d="M2 20h19v2H3z" fill="#3a6a14"/><path d="M16 5 H8 L6 7 V15 L8 17 H16" fill="none" stroke="#e8f8d0" stroke-width="2.4"/></svg>
<svg style="left:167px;top:457px" width="23" height="21" viewBox="0 0 23 21"><path d="M1 3h7l2 2h12v15H1z" fill="#f0c850"/><path d="M1 7h21v13H1z" fill="#fbe08a"/><path d="M4 12 Q11 8 19 12 L19 17 H4z" fill="#6aaee0"/><path d="M8 14 h7 v2 h-7z" fill="#fbe08a"/></svg>
<svg style="left:838px;top:466px" width="8" height="5" viewBox="0 0 8 5"><path d="M1 4L4 1L7 4" fill="none" stroke="#f4f8fa" stroke-width="1.4"/></svg>
<!-- ===== FARADARS LOGO ===== -->
<svg style="left:772px;top:16px" width="66" height="36" viewBox="0 0 66 36">
 <defs>
  <pattern id="gp" width="3.6" height="3.6" patternUnits="userSpaceOnUse" patternTransform="skewY(10)"><rect width="3.6" height="3.6" fill="#b8e6fa"/><rect x="0.5" y="0.5" width="2.7" height="2.7" fill="#1a90da"/></pattern>
  <clipPath id="bk"><path d="M11.6 5 Q22 3 31.7 11.6 Q41 3 51.8 5 L60.3 24.7 Q45 25 31.7 32.5 Q18 25 3.5 24.7 Z"/></clipPath>
 </defs>
 <path d="M11.6 5 Q22 3 31.7 11.6 Q41 3 51.8 5 L60.3 24.7 Q45 25 31.7 32.5 Q18 25 3.5 24.7 Z" fill="url(#gp)"/>
 <g clip-path="url(#bk)" fill="#dfeef8" opacity="0.45"><path d="M13 11h5v3h-3v2h3v3h-3v4h-3z"/><path d="M40 11h4q5 0 5 6q0 6-5 6h-4zM43 14v6h1q2 0 2-3q0-3-2-3z"/></g>
 <path d="M11.6 5 Q22 3 31.7 11.6 Q41 3 51.8 5 L60.3 24.7 Q45 25 31.7 32.5 Q18 25 3.5 24.7 Z" fill="none" stroke="#f4fbff" stroke-width="1.3"/>
</svg>
<div class="t" style="left:715px;top:27.5px;font-size:19px;color:#fff;transform:scaleX(0.9);transform-origin:0 0">فرادرس</div>
<div class="a" style="left:784px;top:52px;width:40px;height:11.5px;background:#dc1414"></div>
<div class="t" style="left:789px;top:54px;font-size:10px;font-weight:bold;color:#fff;transform:scaleX(1.12);transform-origin:0 0">رایگان</div>
</body></html>
